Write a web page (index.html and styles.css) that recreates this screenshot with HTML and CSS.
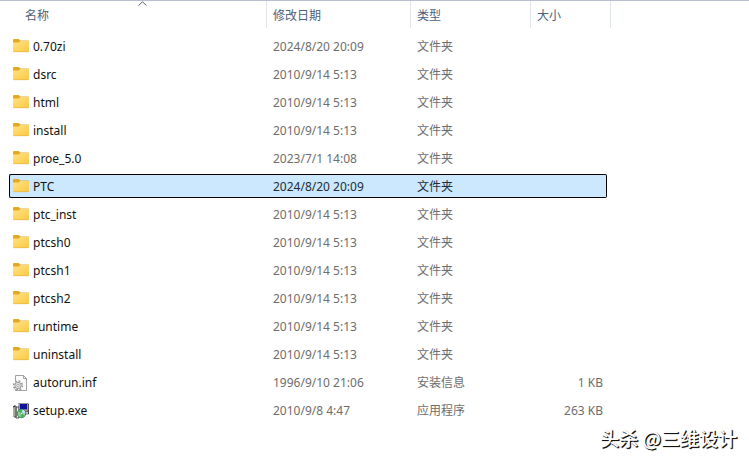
FILE: index.html
```html
<!DOCTYPE html>
<html lang="zh-CN">
<head>
    <meta charset="UTF-8">
    <meta name="viewport" content="width=device-width, initial-scale=1.0">
    <title>文件列表</title>
    <link rel="stylesheet" href="styles.css">
</head>
<body>
    <!-- Icon shapes used by the rows -->
    <svg class="defs" width="0" height="0">
        <defs>
            <linearGradient id="folderFill" x1="0" y1="0" x2="1" y2="1">
                <stop offset="0" stop-color="#ffe28a"/>
                <stop offset="1" stop-color="#fbc940"/>
            </linearGradient>
            <symbol id="folder" viewBox="0 2 16 16">
                <path d="M0 3.2Q0 2 1.2 2H5.6L7.4 3.5H15Q16 3.5 16 4.5V12H0Z" fill="#e5a823"/>
                <path d="M0 5.6H5.6L7.6 4.1H15Q16 4.1 16 5.1V13.8Q16 15 14.8 15H1.2Q0 15 0 13.8Z" fill="url(#folderFill)"/>
                <path d="M.3 14.2Q.6 14.7 1.2 14.7H14.8Q15.4 14.7 15.7 14.2" fill="none" stroke="#e2ae3c" stroke-width=".6"/>
            </symbol>
            <symbol id="inf" viewBox="0 0 16 16">
                <path d="M2.5.5H10.5L13.5 3.5V15.5H2.5Z" fill="#fafafa" stroke="#a2a2a2"/>
                <path d="M10.5.5V3.5H13.5" fill="none" stroke="#a2a2a2"/>
                <circle cx="5" cy="10.5" r="4.4" fill="#fff" stroke="#9a9a9a" stroke-width="1.6" stroke-dasharray="1.8 1.65"/>
                <circle cx="5" cy="10.5" r="3.2" fill="#e4e4e4" stroke="#999"/>
                <circle cx="5" cy="10.5" r="1.2" fill="#fff" stroke="#999" stroke-width=".8"/>
            </symbol>
            <symbol id="exe" viewBox="0 0 16 16">
                <path d="M1 3H3V14H1ZM3 4H6V15H3Z" fill="#f3f3e6" stroke="#333" stroke-width=".8"/>
                <path d="M0 4L2 3" stroke="#222"/>
                <rect x="6" y="0" width="9" height="8" fill="#c9c9c9" stroke="#555" stroke-width=".8"/>
                <rect x="7" y="1" width="7" height="5.5" fill="#10109c"/>
                <path d="M9 8.5H15.5V11H10Z" fill="#d4d4d4" stroke="#444" stroke-width=".7"/>
                <path d="M15.6 1V11" stroke="#222" stroke-width=".8"/>
                <circle cx="8.5" cy="10.5" r="4.2" fill="#8fd0a0" stroke="#27684a" stroke-width=".8"/>
                <path d="M8.5 10.5L5 8.3A4 4 0 0 1 9.5 6.6ZM8.5 10.5L11.8 12.8A4 4 0 0 1 7.5 14.4Z" fill="#45ba45"/>
                <path d="M8.5 10.5L12.4 10A4 4 0 0 0 9.5 6.6Z" fill="#b9e7f2"/>
                <circle cx="8.5" cy="10.5" r="1.1" fill="#fff" stroke="#386e56" stroke-width=".5"/>
            </symbol>
        </defs>
    </svg>

    <main class="explorer">
        <table class="files">
            <colgroup>
                <col class="col-name">
                <col class="col-date">
                <col class="col-type">
                <col class="col-size">
                <col>
            </colgroup>
            <thead>
                <tr>
                    <th class="name" aria-sort="ascending"><button type="button">名称<svg class="sort" width="9" height="5" viewBox="0 0 9 5"><path d="M.5 4.5L4.5 .8L8.5 4.5" fill="none" stroke="#5a6478"/></svg></button></th>
                    <th><button type="button">修改日期</button></th>
                    <th><button type="button">类型</button></th>
                    <th class="size"><button type="button">大小</button></th>
                    <td></td>
                </tr>
            </thead>
            <tbody id="rows"></tbody>
        </table>
    </main>
    <div class="watermark">头杀 @三维设计</div>

    <script>
        const files = [
            { name: "0.70zi", date: "2024/8/20 20:09", type: "文件夹", icon: "folder" },
            { name: "dsrc", date: "2010/9/14 5:13", type: "文件夹", icon: "folder" },
            { name: "html", date: "2010/9/14 5:13", type: "文件夹", icon: "folder" },
            { name: "install", date: "2010/9/14 5:13", type: "文件夹", icon: "folder" },
            { name: "proe_5.0", date: "2023/7/1 14:08", type: "文件夹", icon: "folder" },
            { name: "PTC", date: "2024/8/20 20:09", type: "文件夹", icon: "folder", selected: true },
            { name: "ptc_inst", date: "2010/9/14 5:13", type: "文件夹", icon: "folder" },
            { name: "ptcsh0", date: "2010/9/14 5:13", type: "文件夹", icon: "folder" },
            { name: "ptcsh1", date: "2010/9/14 5:13", type: "文件夹", icon: "folder" },
            { name: "ptcsh2", date: "2010/9/14 5:13", type: "文件夹", icon: "folder" },
            { name: "runtime", date: "2010/9/14 5:13", type: "文件夹", icon: "folder" },
            { name: "uninstall", date: "2010/9/14 5:13", type: "文件夹", icon: "folder" },
            { name: "autorun.inf", date: "1996/9/10 21:06", type: "安装信息", size: "1 KB", icon: "inf" },
            { name: "setup.exe", date: "2010/9/8 4:47", type: "应用程序", size: "263 KB", icon: "exe" }
        ];

        document.getElementById("rows").innerHTML = files.map(f => `
            <tr class="${f.selected ? "selected" : ""}">
                <td class="name"><div class="file"><svg width="16" height="16"><use href="#${f.icon}"/></svg><span>${f.name}</span></div></td>
                <td>${f.date}</td>
                <td>${f.type}</td>
                <td class="size">${f.size || ""}</td>
            </tr>`).join("");

        // Clicking a row moves the selection
        document.querySelectorAll("#rows tr").forEach(row => {
            row.onclick = () => {
                document.querySelectorAll("#rows tr").forEach(r => r.classList.remove("selected"));
                row.classList.add("selected");
            };
        });
    </script>
</body>
</html>
```
FILE: styles.css
```css
* {
    box-sizing: border-box;
    margin: 0;
    padding: 0;
}
body {
    background: #fff;
    font-family: "Noto Sans", "Noto Sans CJK SC", sans-serif;
    font-size: 12px;
    line-height: 16px;
    color: #6d6d6d;
}
.defs {
    position: absolute;
}
.explorer {
    border-top: 1px solid #b9bfd0;
    padding-left: 9px;
}

/* File table */
.files {
    width: 100%;
    margin-top: -4px;
    table-layout: fixed;
    border-spacing: 0 4px;
}
.col-name {
    width: 258px;
}
.col-date {
    width: 144px;
}
.col-type {
    width: 120px;
}
.col-size {
    width: 76px;
}

/* Header */
th {
    height: 29px;
    vertical-align: top;
}
th button {
    display: block;
    position: relative;
    width: 100%;
    height: 27px;
    padding: 2px 6px 0;
    border: none;
    border-right: 1px solid #dfe3ec;
    background: none;
    font: inherit;
    font-weight: normal;
    color: #4c607a;
    text-align: left;
}
th.name button {
    padding-left: 16px;
}
th.size button {
    width: calc(100% + 4px);
}
.sort {
    position: absolute;
    top: 0;
    left: 50%;
}

/* Rows */
tbody td {
    height: 24px;
    padding: 2px 6px 0;
    border: 1px solid transparent;
    border-width: 1px 0;
    white-space: nowrap;
}
tbody td.name {
    padding-left: 3px;
    border-left-width: 1px;
    color: #111;
}
tbody td.size {
    padding-right: 3px;
    border-right-width: 1px;
    text-align: right;
}
.file {
    display: flex;
    align-items: center;
    gap: 4px;
}
.selected td {
    border-color: #000;
    background: #cce8ff;
    color: #222b35;
}
.selected td.name {
    border-radius: 2px 0 0 2px;
}
.selected td.size {
    border-radius: 0 2px 2px 0;
}

/* Watermark over the list */
.watermark {
    position: absolute;
    right: 12px;
    bottom: 11px;
    font-family: "Noto Sans CJK SC", sans-serif;
    font-size: 19px;
    font-weight: 500;
    line-height: 24px;
    color: #fff;
    text-shadow: 1px 1px 0 #111, 1px 1px 1px #111;
}
```
